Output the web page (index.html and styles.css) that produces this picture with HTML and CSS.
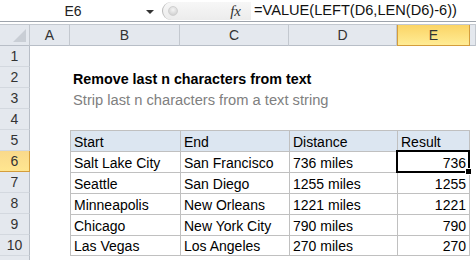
FILE: index.html
```html
<!DOCTYPE html>
<html lang="en">
<head>
  <meta charset="UTF-8">
  <title>Remove last n characters from text</title>
  <link rel="stylesheet" href="styles.css">
</head>
<body>

  <div class="formula-bar">
    <div class="name-box">
      <span class="cell-ref">E6</span>
      <span class="drop"></span>
    </div>
    <div class="fx-box">
      <span class="grip"></span>
      <span class="fx">fx</span>
    </div>
    <div class="formula">=VALUE(LEFT(D6,LEN(D6)-6))</div>
  </div>

  <div class="sheet">
    <div class="row head">
      <div class="rh corner"><span class="tri"></span></div>
      <div class="ch col-a">A</div>
      <div class="ch col-b">B</div>
      <div class="ch col-c">C</div>
      <div class="ch col-d">D</div>
      <div class="ch col-e active">E</div>
      <div class="ch col-f"></div>
    </div>

    <div class="row"><div class="rh">1</div></div>
    <div class="row">
      <div class="rh">2</div>
      <div class="c col-a"></div>
      <div class="c title">Remove last n characters from text</div>
    </div>
    <div class="row">
      <div class="rh">3</div>
      <div class="c col-a"></div>
      <div class="c subtitle">Strip last n characters from a text string</div>
    </div>
    <div class="row"><div class="rh">4</div></div>

    <div class="row">
      <div class="rh">5</div>
      <div class="c col-a"></div>
      <div class="c t th col-b">Start</div>
      <div class="c t th col-c">End</div>
      <div class="c t th col-d">Distance</div>
      <div class="c t th col-e">Result</div>
    </div>
    <div class="row">
      <div class="rh active">6</div>
      <div class="c col-a"></div>
      <div class="c t col-b">Salt Lake City</div>
      <div class="c t col-c">San Francisco</div>
      <div class="c t col-d">736 miles</div>
      <div class="c t col-e num selected">736<span class="sel-box"><span class="handle"></span></span></div>
    </div>
    <div class="row">
      <div class="rh">7</div>
      <div class="c col-a"></div>
      <div class="c t col-b">Seattle</div>
      <div class="c t col-c">San Diego</div>
      <div class="c t col-d">1255 miles</div>
      <div class="c t col-e num">1255</div>
    </div>
    <div class="row">
      <div class="rh">8</div>
      <div class="c col-a"></div>
      <div class="c t col-b">Minneapolis</div>
      <div class="c t col-c">New Orleans</div>
      <div class="c t col-d">1221 miles</div>
      <div class="c t col-e num">1221</div>
    </div>
    <div class="row">
      <div class="rh">9</div>
      <div class="c col-a"></div>
      <div class="c t col-b">Chicago</div>
      <div class="c t col-c">New York City</div>
      <div class="c t col-d">790 miles</div>
      <div class="c t col-e num">790</div>
    </div>
    <div class="row last">
      <div class="rh">10</div>
      <div class="c col-a"></div>
      <div class="c t col-b">Las Vegas</div>
      <div class="c t col-c">Los Angeles</div>
      <div class="c t col-d">270 miles</div>
      <div class="c t col-e num">270</div>
    </div>
    <div class="row"><div class="rh"></div></div>
  </div>

</body>
</html>
```

FILE: styles.css
```css
body {
  margin: 0;
  width: 476px;
  height: 260px;
  overflow: hidden;
  background: #fff;
  color: #000;
  font-family: "Liberation Sans", Arial, sans-serif;
  font-size: 14px;
}

/* formula bar */
.formula-bar {
  display: flex;
  height: 21px;
  border-bottom: 1px solid #9ea4ac;
  margin-bottom: 2px;
}
.name-box {
  position: relative;
  width: 162px;
  display: flex;
  align-items: center;
}
.cell-ref {
  width: 146px;
  text-align: center;
  color: #222;
}
.drop {
  border-left: 4px solid transparent;
  border-right: 4px solid transparent;
  border-top: 4px solid #333;
  margin-top: 2px;
}
.fx-box {
  position: relative;
  width: 89px;
  display: flex;
  align-items: center;
  justify-content: flex-end;
  padding-right: 10px;
  box-sizing: border-box;
  background: linear-gradient(#f7f7f7, #ececec);
  border-left: 1px solid #b9b9b9;
  border-radius: 9px 0 0 9px;
  margin: 2px 0 1px;
}
.grip {
  position: absolute;
  left: 5px;
  top: 4px;
  width: 8px;
  height: 8px;
  border-radius: 50%;
  background: radial-gradient(circle at 50% 35%, #f4f4f4, #c8c8c8);
  border: 1px solid #d0d0d0;
}
.fx {
  font-family: "Liberation Serif", serif;
  font-style: italic;
  font-size: 15px;
  color: #333;
}
.formula {
  flex: 1;
  padding-left: 3px;
  line-height: 21px;
  font-size: 14.6px;
  color: #111;
}

/* sheet */
.row {
  display: flex;
  height: 21px;
}
.rh {
  width: 30px;
  flex: none;
  box-sizing: border-box;
  background: #e4e8ee;
  border-right: 1px solid #b8bec7;
  border-bottom: 1px solid #d3d8df;
  text-align: center;
  line-height: 21px;
  color: #333;
}
.rh.active {
  background: linear-gradient(#f9d98b, #ffe690);
  border-right-color: #d49d3c;
  border-bottom-color: #d49d3c;
}

.head {
  height: 22px;
  border-top: 1px solid #c3c8cf;
  box-sizing: border-box;
}
.head .rh,
.ch {
  height: 21px;
  box-sizing: border-box;
  background: #e4e8ee;
  border-right: 1px solid #c3c8cf;
  border-bottom: 1px solid #b8bec7;
  text-align: center;
  line-height: 21px;
  color: #333;
}
.ch.active {
  background: linear-gradient(#fbd466, #ffec95);
  border: 1px solid #d49d3c;
  border-top: none;
}
.corner {
  position: relative;
}
.tri {
  position: absolute;
  right: 3px;
  bottom: 3px;
  width: 0;
  height: 0;
  border-left: 13px solid transparent;
  border-bottom: 13px solid #c9ced5;
}

.col-a { width: 40px; flex: none; }
.col-b { width: 110px; flex: none; }
.col-c { width: 109px; flex: none; }
.col-d { width: 108px; flex: none; }
.col-e { width: 73px; flex: none; }
.col-f { flex: 1; }

.c {
  box-sizing: border-box;
  display: flex;
  align-items: flex-end;
  padding: 0 3px 1px;
  white-space: nowrap;
}
.title {
  font-weight: bold;
  font-size: 14.3px;
}
.subtitle {
  color: #808080;
  font-size: 14.7px;
}

.t {
  border-left: 1px solid #c0c0c0;
  border-top: 1px solid #c0c0c0;
}
.t.col-e {
  border-right: 1px solid #c0c0c0;
}
.last .t {
  border-bottom: 1px solid #c0c0c0;
}
.th {
  background: #dce6f1;
}
.num {
  justify-content: flex-end;
}

.selected {
  position: relative;
}
.sel-box {
  position: absolute;
  left: -2px;
  top: -2px;
  right: -1px;
  bottom: -1px;
  border: 2px solid #000;
}
.handle {
  position: absolute;
  right: -4px;
  bottom: -4px;
  width: 5px;
  height: 5px;
  background: #000;
  border: 1px solid #fff;
}
```
